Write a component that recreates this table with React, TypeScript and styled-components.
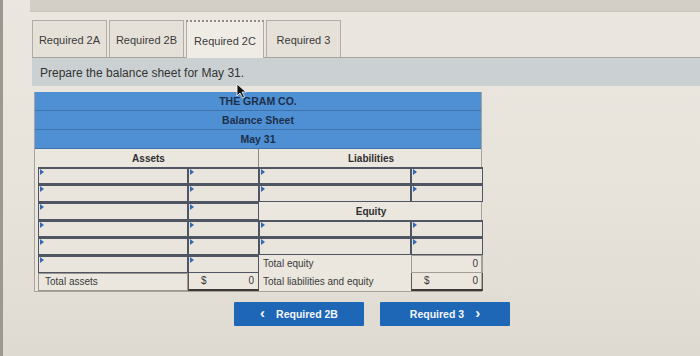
import React from 'react';
import styled, { createGlobalStyle } from 'styled-components';

const GlobalStyle = createGlobalStyle`
  html, body {
    margin: 0;
    padding: 0;
    background: #e6e2da;
  }
  * {
    box-sizing: border-box;
  }
`;

const Screen = styled.div`
  width: 700px;
  height: 356px;
  overflow: hidden;
  font-family: 'Liberation Sans', Arial, sans-serif;
  background: linear-gradient(180deg, #ebe7e0 0%, #e7e3db 55%, #dfdad1 100%);
  border-left: 3px solid #9d978e;
  position: relative;
`;

const TopBar = styled.div`
  height: 12px;
  margin-left: 27px;
  background: #d3cec6;
  border-bottom: 1px solid #c8c3bb;
`;

const Content = styled.div`
  padding: 8px 0 0 29px;
`;

const TabRow = styled.div`
  display: flex;
  gap: 2px;
  height: 38px;
  border-bottom: 1px solid #a8a59f;
`;

const Tab = styled.div<{ $active?: boolean }>`
  width: ${(p) => (p.$active ? 78 : 75)}px;
  display: flex;
  align-items: center;
  justify-content: center;
  padding-top: 2px;
  font-size: 11px;
  color: #3b3b3b;
  background: ${(p) => (p.$active ? '#efece6' : '#e5e1d9')};
  border: 1px solid #b1ada6;
  border-top: ${(p) => (p.$active ? '2px dotted #8f8c87' : '1px solid #b1ada6')};
  border-bottom: none;
  margin-bottom: ${(p) => (p.$active ? '-1px' : '0')};
`;

const Band = styled.div`
  height: 28px;
  background: #cbd1d2;
  display: flex;
  align-items: center;
  padding: 2px 0 0 8px;
  font-size: 12px;
  color: #333;
`;

const Sheet = styled.div`
  margin: 6px 0 0 2px;
  width: 448px;
  border: 1px solid #a7a29a;
  border-top: none;
  background: #ebe7df;
`;

const TitleRow = styled.div`
  height: 19px;
  background: #4f8fd4;
  border-bottom: 1px solid #3e73ae;
  display: flex;
  align-items: center;
  justify-content: center;
  font-size: 10.5px;
  font-weight: bold;
  color: #1c3049;
`;

const Columns = styled.div`
  display: grid;
  grid-template-columns: 224px 224px;
`;

const Side = styled.div<{ $left?: boolean }>`
  display: grid;
  grid-template-columns: ${(p) => (p.$left ? '150px 71px' : '152px 72px')};
  grid-auto-rows: 17.7px;
  padding-left: ${(p) => (p.$left ? '3px' : '0')};
  border-right: ${(p) => (p.$left ? '1px solid #8d8983' : 'none')};
`;

const Heading = styled.div`
  grid-column: 1 / -1;
  height: 19px;
  display: flex;
  align-items: center;
  justify-content: center;
  font-size: 10px;
  font-weight: bold;
  color: #2f2f2f;
`;

const Input = styled.div`
  position: relative;
  border: 1.5px solid #4e5664;
  border-top-width: 2px;
  background: #e9e5dc;

  &::before {
    content: '';
    position: absolute;
    top: 0;
    left: 1px;
    border-left: 4px solid #3568b5;
    border-top: 3px solid transparent;
    border-bottom: 3px solid transparent;
  }
`;

const Label = styled.div<{ $boxed?: boolean }>`
  display: flex;
  align-items: center;
  padding-left: ${(p) => (p.$boxed ? '6px' : '4px')};
  font-size: 10px;
  color: #3a3a3a;
  white-space: nowrap;
  border: ${(p) => (p.$boxed ? '1px solid #9b978f' : 'none')};
`;

const Amount = styled.div<{ $total?: boolean; $boxed?: boolean }>`
  display: flex;
  align-items: center;
  justify-content: space-between;
  padding: 0 4px 0 12px;
  font-size: 10px;
  color: #3a3a3a;
  border: ${(p) => (p.$boxed ? '1px solid #a29e96' : 'none')};
  border-left: ${(p) => (p.$total ? '1px solid #5c5853' : undefined)};
  border-right: ${(p) => (p.$total ? '1px solid #5c5853' : undefined)};
  border-bottom: ${(p) => (p.$total ? '2px solid #3c3936' : undefined)};
`;

const Zero = styled.span`
  margin-left: auto;
`;

const ButtonRow = styled.div`
  display: flex;
  gap: 16px;
  margin: 10px 0 0 202px;
`;

const NavButton = styled.div`
  width: 130px;
  height: 24px;
  background: #1e66b6;
  border-radius: 1px;
  color: #f4f7fb;
  font-size: 10.5px;
  font-weight: bold;
  display: flex;
  align-items: center;
  justify-content: center;
  gap: 11px;
`;

const Chevron = styled.span`
  font-size: 15px;
  line-height: 1;
  margin-top: -2px;
`;

const Cursor = styled.svg`
  position: absolute;
  left: 233px;
  top: 83px;
`;

const tabs = ['Required 2A', 'Required 2B', 'Required 2C', 'Required 3'];

const App = () => {
  return (
    <>
      <GlobalStyle />
      <Screen>
        <TopBar />
        <Content>
          <TabRow>
            {tabs.map((t) => (
              <Tab key={t} $active={t === 'Required 2C'}>
                {t}
              </Tab>
            ))}
          </TabRow>
          <Band>Prepare the balance sheet for May 31.</Band>

          <Sheet>
            <TitleRow>THE GRAM CO.</TitleRow>
            <TitleRow>Balance Sheet</TitleRow>
            <TitleRow>May 31</TitleRow>
            <Columns>
              <Side $left>
                <Heading>Assets</Heading>
                {Array.from({ length: 6 }).map((_, i) => (
                  <React.Fragment key={i}>
                    <Input />
                    <Input />
                  </React.Fragment>
                ))}
                <Label $boxed>Total assets</Label>
                <Amount $total>
                  <span>$</span>
                  <Zero>0</Zero>
                </Amount>
              </Side>
              <Side>
                <Heading>Liabilities</Heading>
                <Input />
                <Input />
                <Input />
                <Input />
                <Heading>Equity</Heading>
                <Input />
                <Input />
                <Input />
                <Input />
                <Label>Total equity</Label>
                <Amount $boxed>
                  <Zero>0</Zero>
                </Amount>
                <Label>Total liabilities and equity</Label>
                <Amount $total>
                  <span>$</span>
                  <Zero>0</Zero>
                </Amount>
              </Side>
            </Columns>
          </Sheet>

          <ButtonRow>
            <NavButton>
              <Chevron>&lsaquo;</Chevron>
              Required 2B
            </NavButton>
            <NavButton>
              Required 3
              <Chevron>&rsaquo;</Chevron>
            </NavButton>
          </ButtonRow>
        </Content>

        <Cursor width="12" height="16" viewBox="0 0 12 16">
          <path d="M1 1 L1 13 L4 10 L6.5 15 L8.5 14 L6 9 L10 9 Z" fill="#111" stroke="#fff" strokeWidth="0.8" />
        </Cursor>
      </Screen>
    </>
  );
};

export default App;
